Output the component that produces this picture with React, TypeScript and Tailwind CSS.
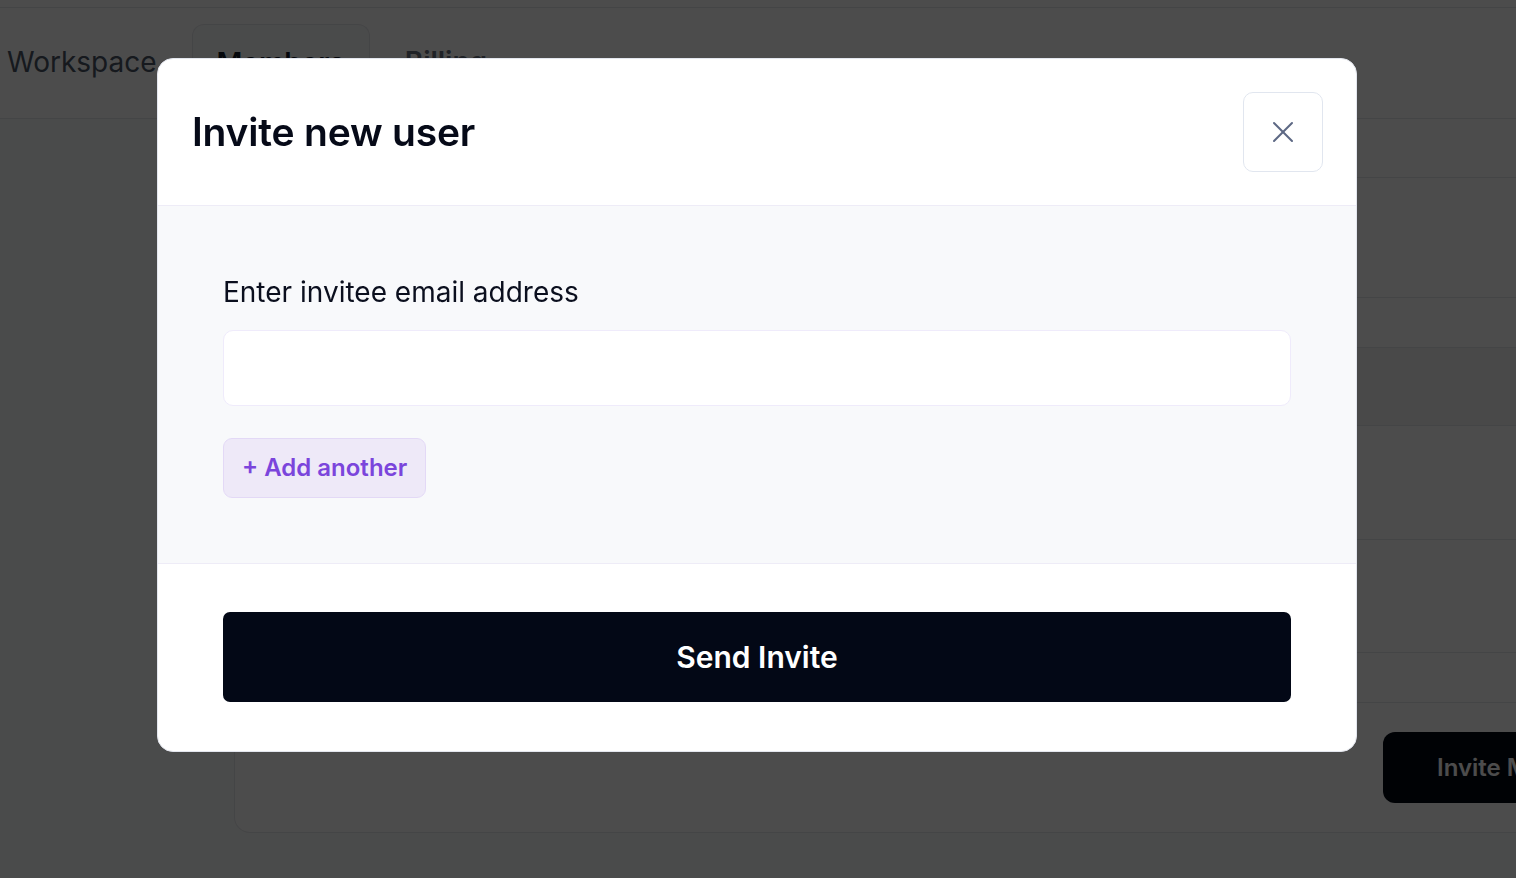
import React, { useState } from "react";
import { X } from "lucide-react";

function BackgroundPage() {
  return (
    <div className="flex h-full flex-col bg-gray-50">
      <div className="h-[8px] shrink-0 border-b border-gray-200 bg-white" />
      <div className="flex h-[111px] shrink-0 gap-[35px] border-b border-gray-200 bg-white pl-[7px] pt-[16px]">
        <span className="pt-[17px] text-[28px] leading-[42px] text-gray-600">Workspace</span>
        <span className="rounded-t-xl border border-b-0 border-gray-200 bg-gray-50 px-[24px] pt-[17px] text-[28px] font-semibold leading-[42px] text-gray-900">
          Members
        </span>
        <span className="pt-[17px] text-[28px] font-semibold leading-[42px] text-gray-500">Billing</span>
      </div>
      <div className="ml-[234px] w-[1400px] rounded-b-2xl border border-t-0 border-gray-200 bg-white">
        <div className="h-[59px] border-b border-gray-200" />
        <div className="h-[120px] border-b border-gray-200" />
        <div className="h-[50px] border-b border-gray-200" />
        <div className="h-[78px] border-b border-gray-200 bg-gray-100" />
        <div className="h-[114px] border-b border-gray-200" />
        <div className="h-[113px] border-b border-gray-200" />
        <div className="h-[50px] border-b border-gray-200" />
        <div className="flex h-[129px] items-start pl-[1148px] pt-[29px]">
          <button className="h-[71px] whitespace-nowrap rounded-xl bg-gray-950 px-[54px] text-[24px] font-semibold text-white">
            Invite Members
          </button>
        </div>
      </div>
    </div>
  );
}

function InviteModal() {
  const [emails, setEmails] = useState<string[]>([""]);

  return (
    <div className="w-[1200px] overflow-hidden rounded-2xl border border-[#e3e6ee] bg-white">
      <div className="flex items-center justify-between border-b border-[#eeecf7] py-[33px] pl-[34px] pr-[33px]">
        <h2 className="text-[39px] font-semibold tracking-[-0.2px] text-[#060a18]">Invite new user</h2>
        <button className="flex h-[80px] w-[80px] items-center justify-center rounded-[10px] border border-[#e1e6ef] bg-white">
          <X size={36} strokeWidth={1.35} className="text-[#5d6884]" />
        </button>
      </div>

      <div className="border-b border-[#eeecf7] bg-[#f8f9fb] px-[65px] pb-[65px] pt-[65px]">
        <label className="mb-[17px] block text-[28px] leading-[42px] text-[#0b0f1e]">
          Enter invitee email address
        </label>
        <div className="flex flex-col gap-[16px]">
          {emails.map((value, i) => (
            <input
              key={i}
              type="email"
              value={value}
              onChange={(e) => {
                const next = [...emails];
                next[i] = e.target.value;
                setEmails(next);
              }}
              className="h-[76px] w-full rounded-[10px] border border-[#efebfb] bg-white px-5 text-[24px] outline-none"
            />
          ))}
        </div>
        <button
          onClick={() => setEmails([...emails, ""])}
          className="mt-[32px] h-[60px] rounded-[9px] border border-[#e3d9f6] bg-[#eee9f8] px-[18px] text-[24px] font-semibold text-[#7b45dc]"
        >
          + Add another
        </button>
      </div>

      <div className="px-[65px] pb-[49px] pt-[48px]">
        <button className="h-[90px] w-full rounded-[7px] bg-[#030816] text-[30px] font-semibold text-white">
          Send Invite
        </button>
      </div>
    </div>
  );
}

export default function App() {
  return (
    <div className="relative h-[878px] w-full overflow-hidden font-['Inter',sans-serif]">
      <BackgroundPage />
      <div className="fixed inset-0 flex items-start justify-start bg-black/70 pl-[157px] pt-[58px]">
        <InviteModal />
      </div>
    </div>
  );
}
